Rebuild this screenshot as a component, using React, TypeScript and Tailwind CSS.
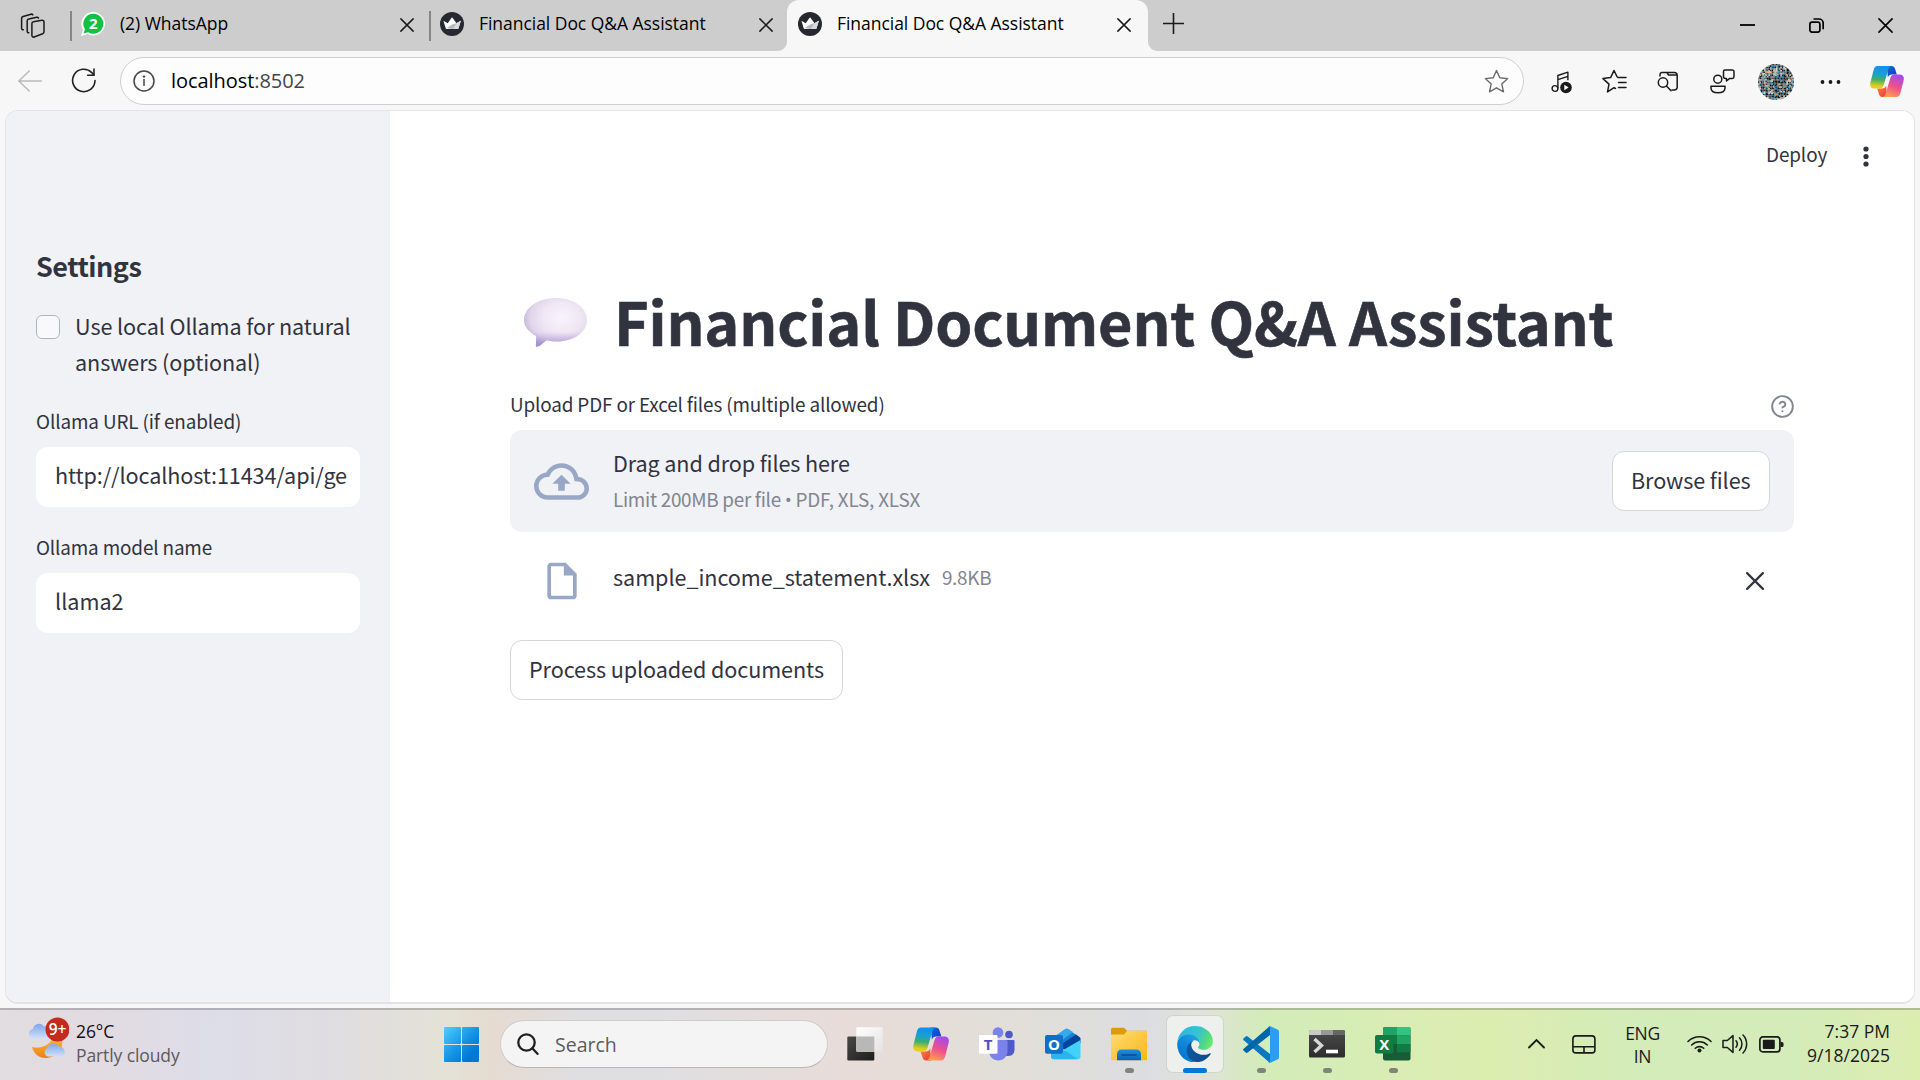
import React from "react";

const UI = "font-['Open_Sans','Noto_Sans',sans-serif]";
const APP = "font-['Noto_Sans_CJK_SC','Noto_Sans',sans-serif]";

function T({ className = "", children }: { className?: string; children: React.ReactNode }) {
  return <span className={`block whitespace-nowrap ${className}`}>{children}</span>;
}

/* ---------- browser icons ---------- */

function Cross({ size, sw, color = "#1a1a1a" }: { size: number; sw: number; color?: string }) {
  return (
    <svg width={size} height={size} viewBox="0 0 16 16" fill="none" stroke={color} strokeWidth={sw} strokeLinecap="round">
      <path d="M1 1l14 14M15 1L1 15" />
    </svg>
  );
}

function CrownIcon() {
  return (
    <svg width="24" height="24" viewBox="0 0 24 24">
      <circle cx="12" cy="12" r="12" fill="#262730" />
      <path d="M3.400 8.800l4.300 2.400L11.600 5.800a.6.6 0 01.9 0l4 5.400 4.300-2.400-2.300 7.400a1 1 0 01-1 .7H6.700a1 1 0 01-1-.7z" fill="#fff" />
      <path d="M12 12.500l4.500-1.300 4.300-2.400-2.300 7.400a1 1 0 01-1 .7H12l-5.300-1z" fill="#b9bac0" />
      <path d="M20.800 8.800l-4.300 2.400L13 16.900h4.500a1 1 0 001-.7z" fill="#d9dadd" />
    </svg>
  );
}

function WhatsAppIcon() {
  return (
    <svg width="24" height="24" viewBox="0 0 24 24">
      <path d="M12.300 0a11.700 11.700 0 11-5.600 22L0 24l1.900-6.600A11.700 11.700 0 0112.300 0z" fill="#fff" />
      <path d="M12.300 1.800a10 10 0 11-5.200 18.500l-4.500 1.200 1.300-4.300A10 10 0 0112.300 1.800z" fill="#12c143" />
      <text x="12.300" y="17.200" textAnchor="middle" fontSize="15" fontWeight="700" fill="#fff" fontFamily="Open Sans">2</text>
    </svg>
  );
}

function WorkspacesIcon() {
  return (
    <svg width="25" height="25" viewBox="0 0 25 25" fill="none" stroke="#1a1a1a" strokeWidth="1.500" strokeLinejoin="round" strokeLinecap="round">
      <path d="M13.500 8.800l8.300-1.600a1.800 1.800 0 012.200 1.800v9.800a2 2 0 01-1.300 1.900l-8.600 3.300a1.600 1.600 0 01-2.200-1.500V10.600a1.900 1.900 0 011.600-1.800z" />
      <path d="M8.800 19.800a1.500 1.500 0 01-1.600-1.500V7.800A2 2 0 018.800 6l7.900-1.800a1.600 1.600 0 011.800.9" />
      <path d="M3.300 16.800A1.500 1.500 0 011.600 15.300V5.200a2 2 0 011.500-1.800L11 1.200a1.600 1.600 0 011.800.7" />
    </svg>
  );
}

function BackIcon() {
  return (
    <svg width="24" height="24" viewBox="0 0 24 24" fill="none" stroke="#b9b9b9" strokeWidth="1.500" strokeLinecap="round" strokeLinejoin="round">
      <path d="M23.500 12H1M11.200 2L.8 12l10.400 10" />
    </svg>
  );
}

function ReloadIcon() {
  return (
    <svg width="25" height="25" viewBox="0 0 25 25" fill="none" stroke="#222" strokeWidth="1.600" strokeLinecap="round" strokeLinejoin="round">
      <path d="M24 12.500a11.200 11.200 0 11-3.200-7.900L22.700 7" />
      <path d="M23 1v6.300h-6.300" />
    </svg>
  );
}

function InfoIcon() {
  return (
    <svg width="22" height="22" viewBox="0 0 22 22" fill="none" stroke="#444" strokeWidth="1.500">
      <circle cx="11" cy="11" r="10" />
      <path d="M11 9.500v6" strokeLinecap="round" />
      <circle cx="11" cy="6.600" r="1.200" fill="#444" stroke="none" />
    </svg>
  );
}

function StarIcon() {
  return (
    <svg width="25" height="25" viewBox="0 0 25 25" fill="none" stroke="#6b6b6b" strokeWidth="1.400" strokeLinejoin="round">
      <path d="M12.500 1.500l3.300 7.200 7.900.9-5.900 5.300 1.700 7.900-7-4-7 4 1.700-7.900L1.300 9.600l7.900-.9z" />
    </svg>
  );
}

function MusicIcon() {
  return (
    <svg width="22" height="24" viewBox="0 0 22 24" fill="none" stroke="#1a1a1a" strokeWidth="1.400" strokeLinejoin="round">
      <circle cx="4" cy="18.500" r="2.900" />
      <path d="M6.900 18.500V5.500l10-3.300v8M6.900 9.600l10-3.300" />
      <circle cx="15" cy="17.500" r="5.800" fill="#1a1a1a" stroke="none" />
      <path d="M13.300 14.700v5.600l4.300-2.800z" fill="#fff" stroke="none" />
    </svg>
  );
}

function FavoritesIcon() {
  return (
    <svg width="25" height="25" viewBox="0 0 25 25" fill="none" stroke="#1a1a1a" strokeWidth="1.500" strokeLinejoin="round" strokeLinecap="round">
      <path d="M16 8.500h8M16.500 13.500h7.500M16.500 18.500h7.500" />
      <path d="M13.500 19.500l-1.500-.8-6.500 4.200 1.500-7.800L1 9.600l7.600-1L12 1.500l3.200 6.500" />
    </svg>
  );
}

function HistorySearchIcon() {
  return (
    <svg width="22" height="22" viewBox="0 0 22 22" fill="none" stroke="#1a1a1a" strokeWidth="1.500" strokeLinejoin="round" strokeLinecap="round">
      <path d="M3 5V3.500a2 2 0 012-2h5l1.500 2.500h8.500M10 1.500h7.500a2.700 2.700 0 012.700 2.700v12a2.700 2.700 0 01-2.700 2.700H15" />
      <circle cx="6" cy="11.500" r="4.700" />
      <path d="M9.500 15l4.500 4.700" />
    </svg>
  );
}

function FeedbackIcon() {
  return (
    <svg width="25" height="25" viewBox="0 0 25 25" fill="none" stroke="#1a1a1a" strokeWidth="1.500" strokeLinejoin="round">
      <circle cx="7.800" cy="10.200" r="4" />
      <path d="M1 17.200h14v1.800c0 3-3 4.800-7 4.800s-7-1.800-7-4.800z" />
      <path d="M14.500 1h7.800a1.700 1.700 0 011.700 1.700v5a1.700 1.700 0 01-1.700 1.700h-2.600L16.500 12V9.400h-1a2 2 0 01-2-2V2.600A1.600 1.600 0 0114.500 1z" />
    </svg>
  );
}

const mosaicColors = ["#10161d", "#1d4f6b", "#2f7fa0", "#5fb6c9", "#8d6a4f", "#c9a98a", "#3a2a26", "#0b2030", "#d8cfc4", "#46586a", "#17191c", "#2a6680", "#b08a6a"];

function Avatar() {
  const cells: React.ReactNode[] = [];
  let seed = 11;
  for (let y = 0; y < 24; y++) {
    for (let x = 0; x < 24; x++) {
      seed = (seed * 1103515245 + 12345) % 2147483648;
      cells.push(<rect key={`${x}-${y}`} x={x * 1.5} y={y * 1.5} width="1.500" height="1.500" fill={mosaicColors[Math.floor((seed / 2147483648) * mosaicColors.length)]} />);
    }
  }
  return (
    <svg width="36" height="36" viewBox="0 0 36 36" className="rounded-full">
      {cells}
      <path d="M18 30C7 23 5 17 6 13c1.500-5 8-6 12-1 4-5 10.500-4 12 1 1 4-1 10-12 17z" fill="#0c1a24" fillOpacity=".15" stroke="#d9c99f" strokeOpacity=".7" strokeWidth="1" />
    </svg>
  );
}

function Copilot({ id, w, h }: { id: string; w: number; h: number }) {
  return (
    <svg width={w} height={h} viewBox="0 0 34 31">
      <defs>
        <linearGradient id={`${id}a`} x1=".4" y1="0" x2=".3" y2="1">
          <stop offset="0" stopColor="#0f8ff0" />
          <stop offset=".35" stopColor="#1b9fd0" />
          <stop offset=".6" stopColor="#3fae6a" />
          <stop offset=".9" stopColor="#e8cf16" />
        </linearGradient>
        <linearGradient id={`${id}b`} x1=".7" y1="0" x2=".3" y2="1">
          <stop offset="0" stopColor="#a24bf0" />
          <stop offset=".5" stopColor="#ee4f8d" />
          <stop offset="1" stopColor="#ffa14f" />
        </linearGradient>
        <linearGradient id={`${id}c`} x1="0" y1="0" x2="1" y2="1">
          <stop offset="0" stopColor="#0a6ad8" />
          <stop offset="1" stopColor="#1637c4" />
        </linearGradient>
        <linearGradient id={`${id}d`} x1="0" y1="0" x2="1" y2="1">
          <stop offset="0" stopColor="#ff8a3c" />
          <stop offset="1" stopColor="#e8343c" />
        </linearGradient>
      </defs>
      <path d="M17 0h4.500c2 0 3 1 3.600 3l1.700 5.500h-5c-2 0-3.300 1-4 3z" fill={`url(#${id}c)`} />
      <path d="M17 31h-4.500c-2 0-3-1-3.600-3l-1.700-5.500h5c2 0 3.300-1 4-3z" fill={`url(#${id}d)`} />
      <path d="M7.500 0H22c-2 0-3 1.300-3.700 3.500l-4.600 15.500c-.8 2.500-2 3.500-4.500 3.500H4.500C.5 22.500-.4 19.500.4 16.500L3.600 4C4.300 1.300 5.500 0 7.500 0z" fill={`url(#${id}a)`} />
      <path d="M26.500 31H12c2 0 3-1.300 3.700-3.500l4.600-15.500c.8-2.500 2-3.500 4.500-3.500h4.700c4 0 4.900 3 4.100 6L30.400 27c-.7 2.700-1.900 4-3.900 4z" fill={`url(#${id}b)`} />
    </svg>
  );
}

/* ---------- browser chrome ---------- */

function TabBar() {
  return (
    <div className={`flex h-[51px] w-full bg-[#cdcdcd] text-[17.500px] tracking-[-0.04px] text-black ${UI}`}>
      <div className="flex w-[70px] items-center pl-[20px]">
        <WorkspacesIcon />
      </div>
      <div className="flex h-[51px] w-[359px] items-start">
        <div className="mt-[11px] h-[30px] w-[2px] bg-[#868686]" />
        <div className="mt-[12px] ml-[9px]"><WhatsAppIcon /></div>
        <T className="mt-[11px] ml-[15px] w-[280px] leading-[24px]">(2) WhatsApp</T>
        <div className="mt-[18px]"><Cross size={14} sw={1.7} /></div>
      </div>
      <div className="flex h-[51px] w-[358px] items-start">
        <div className="mt-[11px] h-[30px] w-[2px] bg-[#868686]" />
        <div className="mt-[12px] ml-[9px]"><CrownIcon /></div>
        <T className="mt-[11px] ml-[15px] w-[280px] leading-[24px]">Financial Doc Q&amp;A Assistant</T>
        <div className="mt-[18px]"><Cross size={14} sw={1.7} /></div>
      </div>
      <div className="relative flex h-[51px] w-[361px] items-start rounded-t-[12px] bg-[#f7f7f7]">
        <svg className="absolute bottom-0 -left-[9px]" width="9" height="9" viewBox="0 0 9 9"><path d="M9 0v9H0a9 9 0 009-9z" fill="#f7f7f7" /></svg>
        <svg className="absolute -right-[9px] bottom-0" width="9" height="9" viewBox="0 0 9 9"><path d="M0 0v9h9a9 9 0 01-9-9z" fill="#f7f7f7" /></svg>
        <div className="mt-[12px] ml-[11px]"><CrownIcon /></div>
        <T className="mt-[11px] ml-[15px] w-[280px] leading-[24px]">Financial Doc Q&amp;A Assistant</T>
        <div className="mt-[18px]"><Cross size={14} sw={1.7} /></div>
      </div>
      <svg className="mt-[13px] ml-[15px]" width="21" height="21" viewBox="0 0 21 21" stroke="#1a1a1a" strokeWidth="1.600"><path d="M10.500 0v21M0 10.500h21" /></svg>
      <div className="ml-auto flex gap-[54px] pt-[18px] pr-[27px]">
        <svg width="15" height="15" viewBox="0 0 15 15"><path d="M0 7h15" stroke="#000" strokeWidth="1.800" /></svg>
        <svg width="15" height="15" viewBox="0 0 15 15" fill="none" stroke="#000" strokeWidth="1.700">
          <rect x=".9" y="4.200" width="10" height="10" rx="2.200" />
          <path d="M4.500 1H10a4.200 4.200 0 014.200 4.200v6" />
        </svg>
        <Cross size={15} sw={1.7} color="#000" />
      </div>
    </div>
  );
}

function Toolbar() {
  return (
    <div className={`flex h-[59px] w-full items-start bg-[#f7f7f7] ${UI}`}>
      <div className="mt-[18px] ml-[18px]"><BackIcon /></div>
      <div className="mt-[17px] ml-[29px]"><ReloadIcon /></div>
      <div className="mt-[6px] ml-[24px] flex h-[48px] w-[1404px] items-center rounded-full border-[1.500px] border-[#cfcfcf] bg-[#fdfdfd] pr-[14px] pl-[12px]">
        <InfoIcon />
        <T className="ml-[16px] text-[20px] leading-[28px] tracking-[-0.06px] text-black">localhost<span className="text-[#444]">:8502</span></T>
        <div className="ml-auto"><StarIcon /></div>
      </div>
      <div className="mt-[18px] ml-[27px] flex h-[25px] items-center">
        <MusicIcon />
        <div className="ml-[29px]"><FavoritesIcon /></div>
        <div className="ml-[30px]"><HistorySearchIcon /></div>
        <div className="ml-[31px]"><FeedbackIcon /></div>
        <div className="ml-[23px]"><Avatar /></div>
        <svg className="ml-[26px]" width="22" height="6" viewBox="0 0 22 6" fill="#1a1a1a"><circle cx="2.500" cy="3" r="1.900" /><circle cx="10.500" cy="3" r="1.900" /><circle cx="18.500" cy="3" r="1.900" /></svg>
        <div className="ml-[28px]"><Copilot id="cpt" w={34} h={31} /></div>
      </div>
    </div>
  );
}

/* ---------- Streamlit page ---------- */

function Sidebar() {
  return (
    <aside className="flex h-full w-[384px] flex-col bg-[#f0f2f6] pt-[137px] pl-[30px] text-[#31333f]">
      <T className="text-[27px] leading-[36px] font-bold tracking-[-0.500px]">Settings</T>
      <div className="mt-[24px] flex">
        <div className="mt-[7px] h-[24px] w-[24px] rounded-[6px] border-[1.500px] border-[#b3b4ba] bg-[#f9f9fb]" />
        <div className="ml-[15px] text-[21.600px] leading-[36px] tracking-[-0.1px]">
          <T>Use local Ollama for natural</T>
          <T>answers (optional)</T>
        </div>
      </div>
      <T className="mt-[26px] text-[18.900px] leading-[30px] tracking-[-0.120px]">Ollama URL (if enabled)</T>
      <div className="mt-[11px] flex h-[60px] w-[324px] items-center overflow-hidden rounded-[12px] bg-white pb-[4px] pl-[19px] text-[21.600px]">
        <T className="leading-[36px] tracking-[-0.11px]">http://localhost:11434/api/ge</T>
      </div>
      <T className="mt-[25px] text-[18.900px] leading-[30px] tracking-[-0.150px]">Ollama model name</T>
      <div className="mt-[11px] flex h-[60px] w-[324px] items-center rounded-[12px] bg-white pb-[4px] pl-[19px] text-[21.600px]">
        <T className="leading-[36px]">llama2</T>
      </div>
    </aside>
  );
}

function SpeechBubble() {
  return (
    <svg width="63" height="49" viewBox="0 0 63 49">
      <defs>
        <radialGradient id="bub" cx=".6" cy=".4" r=".65">
          <stop offset="0" stopColor="#f8f4fb" />
          <stop offset=".45" stopColor="#f0e8f5" />
          <stop offset=".78" stopColor="#e0d5ea" />
          <stop offset="1" stopColor="#bcadd4" />
        </radialGradient>
        <linearGradient id="tail" x1="0" y1="0" x2="0" y2="1">
          <stop offset=".7" stopColor="#a58bd0" stopOpacity="0" />
          <stop offset="1" stopColor="#9a80cc" stopOpacity=".8" />
        </linearGradient>
      </defs>
      <path d="M32 0C50 0 63 10 63 22S50 43.500 33 43.500c-4 0-7-.3-10-1.200C20 44 17 48 12.800 48.800c-.9 0-1-.5-.9-1.300L12.200 38C5 34 0 29 0 22 0 10 14 0 32 0z" fill="url(#bub)" />
      <path d="M32 0C50 0 63 10 63 22S50 43.500 33 43.500c-4 0-7-.3-10-1.200C20 44 17 48 12.800 48.800c-.9 0-1-.5-.9-1.300L12.200 38C5 34 0 29 0 22 0 10 14 0 32 0z" fill="url(#tail)" />
    </svg>
  );
}

function Main() {
  return (
    <main className="flex h-full min-w-0 flex-1 flex-col bg-white text-[#31333f]">
      <div className="flex h-[90px] items-center justify-end pr-[45px]">
        <T className="-mt-[4px] w-[60px] text-[18.900px] leading-[30px] tracking-[-0.1px]">Deploy</T>
        <svg className="ml-[37px]" width="6" height="21" viewBox="0 0 6 21" fill="#31333f"><circle cx="3" cy="3" r="2.600" /><circle cx="3" cy="10.500" r="2.600" /><circle cx="3" cy="18" r="2.600" /></svg>
      </div>
      <div className="flex w-[1404px] flex-col pt-[81px] pl-[120px]">
        <div className="flex h-[80px] items-center pl-[14px]">
          <SpeechBubble />
          <T className="-mt-[4px] ml-[27px] text-[59.400px] leading-[80px] font-bold tracking-[-0.170px] [-webkit-text-stroke:0.6px_#31333f]">Financial Document Q&amp;A Assistant</T>
        </div>
        <div className="mt-[29px] flex h-[30px] items-center justify-between">
          <T className="-mt-[4px] text-[18.900px] leading-[30px] tracking-[-0.150px]">Upload PDF or Excel files (multiple allowed)</T>
          <svg width="23" height="23" viewBox="0 0 24 24" fill="none" stroke="#83858f" strokeWidth="2" strokeLinecap="round" strokeLinejoin="round">
            <circle cx="12" cy="12" r="10.800" />
            <path d="M9.090 9a3 3 0 015.830 1c0 2-3 3-3 3M12 17h.010" />
          </svg>
        </div>
        <div className="mt-[9px] flex h-[102px] items-center rounded-[12px] bg-[#f0f2f6] pr-[24px] pl-[24px]">
          <svg width="55" height="55" viewBox="0 0 24 24" fill="#98a7c6"><path d="M19.350 10.040A7.490 7.490 0 0012 4C9.110 4 6.600 5.640 5.350 8.040A5.994 5.994 0 000 14c0 3.310 2.690 6 6 6h13c2.760 0 5-2.240 5-5 0-2.640-2.050-4.780-4.650-4.960zM19 18H6c-2.210 0-4-1.790-4-4 0-2.050 1.530-3.760 3.560-3.970l1.070-.11.5-.95A5.469 5.469 0 0112 6c2.620 0 4.880 1.860 5.390 4.430l.3 1.500 1.530.11A2.980 2.980 0 0122 15c0 1.650-1.350 3-3 3zM8 13h2.550v3h2.900v-3H16l-4-4z" /></svg>
          <div className="ml-[24px] flex flex-col">
            <T className="text-[21.600px] leading-[36px] tracking-[-0.11px]">Drag and drop files here</T>
            <T className="text-[18.900px] leading-[36px] tracking-[-0.3px] text-[#83858f]">
              Limit 200MB per file <span className="font-['Open_Sans']">•</span> <span className="tracking-[-0.2px]">PDF, XLS, XLSX</span>
            </T>
          </div>
          <div className="ml-auto flex h-[60px] w-[158px] items-center rounded-[12px] border-[1.500px] border-[#d6d6d9] bg-white pb-[2px] pl-[18px]">
            <T className="text-[21.600px] leading-[36px] tracking-[-0.1px]">Browse files</T>
          </div>
        </div>
        <div className="mt-[25px] flex h-[48px] items-center pr-[30px] pl-[30px]">
          <svg width="44" height="44" viewBox="0 0 24 24" fill="#98a7c6"><path d="M14 2H6c-1.100 0-1.990.9-1.990 2L4 20c0 1.100.89 2 1.990 2H18c1.100 0 2-.9 2-2V8l-6-6zM6 20V4h7v5h5v11H6z" /></svg>
          <T className="-mt-[9px] ml-[29px] text-[21.600px] leading-[36px] tracking-[-0.06px]">sample_income_statement.xlsx</T>
          <T className="-mt-[8px] ml-[12px] text-[18.900px] leading-[36px] tracking-[-0.3px] text-[#83858f]">9.8KB</T>
          <div className="ml-auto"><Cross size={18} sw={1.9} color="#31333f" /></div>
        </div>
        <div className="mt-[35px] flex h-[60px] w-[333px] items-center rounded-[12px] border-[1.500px] border-[#d6d6d9] bg-white pb-[2px] pl-[18px]">
          <T className="text-[21.600px] leading-[36px] tracking-[-0.09px]">Process uploaded documents</T>
        </div>
      </div>
    </main>
  );
}

/* ---------- taskbar ---------- */

function WeatherIcon() {
  return (
    <svg width="42" height="42" viewBox="0 0 42 42">
      <defs>
        <linearGradient id="cl" x1="0" y1="0" x2="0" y2="1"><stop offset="0" stopColor="#7fa6e8" /><stop offset="1" stopColor="#cfe0fa" /></linearGradient>
        <linearGradient id="mo" x1="0" y1="0" x2="0" y2="1"><stop offset="0" stopColor="#f7b733" /><stop offset="1" stopColor="#f07f1a" /></linearGradient>
      </defs>
      <path d="M6 21.500a4.800 4.800 0 010-9.500 6 6 0 0111-2.500 5 5 0 017 4v8z" fill="url(#cl)" />
      <path d="M5 30c8 2 16-1 20-8h10c2 10-5 19-17 19-6 0-11-4-13-11z" fill="url(#mo)" />
      <path d="M21 39.500a4.500 4.500 0 01-.5-8.500 6.500 6.500 0 0112-1 4.900 4.900 0 012 9.500z" fill="url(#cl)" />
      <circle cx="30.500" cy="12.500" r="12" fill="#c42b1c" />
      <text x="30.500" y="17.500" textAnchor="middle" fontSize="15.500" fontWeight="600" fill="#fff" fontFamily="Open Sans">9+</text>
    </svg>
  );
}

function WindowsIcon() {
  return (
    <svg width="35" height="35" viewBox="0 0 35 35">
      <defs><linearGradient id="win" gradientUnits="userSpaceOnUse" x1="0" y1="0" x2="35" y2="35"><stop offset="0" stopColor="#4cd0fb" /><stop offset=".5" stopColor="#1793e4" /><stop offset=".8" stopColor="#0078d4" /></linearGradient></defs>
      <g fill="url(#win)"><rect width="17" height="17" rx="1" /><rect x="18" width="17" height="17" rx="1" /><rect y="18" width="17" height="17" rx="1" /><rect x="18" y="18" width="17" height="17" rx="1" /></g>
    </svg>
  );
}

function TaskViewIcon() {
  return (
    <svg width="36" height="36" viewBox="0 0 36 36">
      <defs>
        <linearGradient id="tv" x1="0" y1="0" x2="1" y2="1"><stop offset="0" stopColor="#4a4845" /><stop offset="1" stopColor="#1c1c1c" /></linearGradient>
        <linearGradient id="tw" x1="0" y1="0" x2="1" y2="1"><stop offset="0" stopColor="#ffffff" /><stop offset="1" stopColor="#e4e2e2" /></linearGradient>
      </defs>
      <rect x=".3" y="10.500" width="27" height="24" rx="1.200" fill="url(#tv)" />
      <rect x="9.300" y="1.300" width="26.400" height="24.400" rx="1" fill="url(#tw)" />
      <path d="M9.300 10.500h18v14.200a1 1 0 01-1 1h-16a1 1 0 01-1-1z" fill="#b9b8b8" />
    </svg>
  );
}

function TeamsIcon() {
  return (
    <svg width="36" height="36" viewBox="0 0 36 36">
      <circle cx="19" cy="6.500" r="5.300" fill="#7b83eb" />
      <circle cx="30" cy="8.500" r="3.800" fill="#5059c9" />
      <path d="M26 14h8.500a1 1 0 011 1v8c0 4-2 7-6 7h-4z" fill="#5059c9" />
      <path d="M12 14h15a1.500 1.500 0 011.500 1.500V25c0 5.500-4 9.500-9.200 9.500S10 30.500 10 25z" fill="#7b83eb" />
      <rect x="0" y="9" width="18.500" height="18.800" rx="1" fill="#fff" />
      <text x="9.200" y="24" textAnchor="middle" fontSize="15" fontWeight="700" fill="#4b53bc" fontFamily="Open Sans">T</text>
    </svg>
  );
}

function OutlookIcon() {
  return (
    <svg width="36" height="36" viewBox="0 0 36 36">
      <path d="M8 12L20 3.200a2.500 2.500 0 013 0l12 8.300V28H6z" fill="#1484d8" />
      <path d="M10 10l10.500-7a2.500 2.500 0 012.600 0L28 6 12 18z" fill="#37a9ea" />
      <path d="M18 17l13-8.500 4.500 3.500v5L18 26z" fill="#03449a" />
      <path d="M6 25l14-2 15.500-9v16.500a2.800 2.800 0 01-2.800 2.800H9a3 3 0 01-3-3z" fill="#40d2f8" />
      <path d="M6 25h15l12 8.300H9a3 3 0 01-3-3z" fill="#2bb5ee" />
      <rect x="0" y="9" width="18" height="18.800" rx="2" fill="#0f6fc9" />
      <text x="9" y="23.800" textAnchor="middle" fontSize="15" fontWeight="700" fill="#fff" fontFamily="Open Sans">O</text>
    </svg>
  );
}

function FolderIcon() {
  return (
    <svg width="36" height="36" viewBox="0 0 36 36">
      <defs>
        <linearGradient id="fo" x1="0" y1="0" x2="1" y2="1"><stop offset="0" stopColor="#ffdc74" /><stop offset="1" stopColor="#fbb618" /></linearGradient>
        <linearGradient id="fb" x1="0" y1="0" x2="0" y2="1"><stop offset="0" stopColor="#1b8fe0" /><stop offset="1" stopColor="#0a62b4" /></linearGradient>
      </defs>
      <path d="M0 3.500A1.700 1.700 0 011.700 1.800H13l3 3h19.500V12H0z" fill="#dd9a0a" />
      <path d="M0 8.500h13l3-3.500h18.500a1.500 1.500 0 011.500 1.500V34.300H0z" fill="url(#fo)" />
      <path d="M6 34.300V28a4.500 4.500 0 014.500-4.500h15A4.500 4.500 0 0130 28v6.300z" fill="url(#fb)" />
      <path d="M11 29h14" stroke="#0a4a92" strokeWidth="1.600" strokeLinecap="round" />
    </svg>
  );
}

function EdgeIcon() {
  return (
    <svg width="36" height="36" viewBox="0 0 256 258">
      <defs>
        <linearGradient id="e1" x1="0" y1=".6" x2="1" y2=".8"><stop offset="0" stopColor="#0c59a4" /><stop offset="1" stopColor="#114a8b" /></linearGradient>
        <linearGradient id="e2" x1=".8" y1=".2" x2=".3" y2="1"><stop offset="0" stopColor="#1b9de2" /><stop offset=".4" stopColor="#1087d8" /><stop offset="1" stopColor="#0075d0" /></linearGradient>
        <linearGradient id="e3" x1="0" y1=".3" x2="1" y2=".6"><stop offset="0" stopColor="#2fb6e4" /><stop offset=".5" stopColor="#35c1d6" /><stop offset=".8" stopColor="#4fd48a" /><stop offset="1" stopColor="#66eb6e" /></linearGradient>
      </defs>
      <path d="M235.680 195.510a93.730 93.730 0 01-10.540 4.710 101.870 101.870 0 01-35.900 6.460c-47.320 0-88.540-32.550-88.540-74.320A31.480 31.480 0 01117.130 105c-42.800 1.800-53.800 46.400-53.800 72.530 0 73.880 68.090 81.370 82.760 81.370 7.910 0 19.840-2.300 27-4.560l1.310-.44a128.340 128.340 0 0066.600-52.800 4 4 0 00-5.320-5.590z" fill="url(#e1)" />
      <path d="M105.730 246.990a79.200 79.200 0 01-22.740-21.340 80.720 80.720 0 0129.530-120c3.140-1.440 8.480-4.210 15.630-4.100a32.350 32.350 0 0125.690 13 31.880 31.880 0 016.360 18.660c0-.21 24.460-79.600-80-79.600-43.900 0-80 41.660-80 78.210a130.150 130.150 0 0012.110 56 128 128 0 00156.380 67.110 75.550 75.550 0 01-62.780-8z" fill="url(#e2)" />
      <path d="M152.330 148.860c-.81 1.050-3.300 2.500-3.300 5.660 0 2.610 1.700 5.120 4.720 7.230 14.380 10 41.490 8.680 41.560 8.680A59.560 59.560 0 00225.590 162 61.380 61.380 0 00256 109.080c.26-22.410-8-37.310-11.340-43.910C223.460 23.760 177.720 0 128 0A128 128 0 000 126.200c.48-36.540 36.800-66.050 80-66.050 3.500 0 23.460.34 42 10.070 16.340 8.580 24.900 18.940 30.850 29.210 6.180 10.670 7.280 24.150 7.280 29.520s-2.740 13.330-7.800 19.910z" fill="url(#e3)" />
    </svg>
  );
}

function VSCodeIcon() {
  return (
    <svg width="36" height="37" viewBox="0 0 36 37">
      <path d="M.7 12.300l2-1.900a1.500 1.500 0 012 0L27 28v9L.7 14.300a1.300 1.300 0 010-2z" fill="#0a77c2" />
      <path d="M.7 24.700l2 1.900a1.500 1.500 0 002 0L27 9V0L.7 22.700a1.300 1.300 0 000 2z" fill="#0065a9" />
      <path d="M25 36.500c1 .7 2 .6 3 .1l7-3.400a2 2 0 001-1.800V5.600a2 2 0 00-1-1.800L28 .4a2.400 2.400 0 00-3 .5c1-.6 2 .1 2 1.400v32.400c0 1.300-1 2.200-2 1.800z" fill="#2a9ff0" />
    </svg>
  );
}

function TerminalIcon() {
  return (
    <svg width="36" height="36" viewBox="0 0 36 36">
      <defs><linearGradient id="te" x1="0" y1="0" x2="0" y2="1"><stop offset="0" stopColor="#4c4c4c" /><stop offset="1" stopColor="#2c2c2c" /></linearGradient></defs>
      <rect y="4" width="36" height="27.500" rx="1.500" fill="url(#te)" />
      <path d="M1.500 4H12v5H0V5.500A1.500 1.500 0 011.500 4z" fill="#c9c9c9" />
      <path d="M12 4h12v5H12z" fill="#999" />
      <path d="M24 4h10.500A1.500 1.500 0 0136 5.500V9H24z" fill="#666" />
      <path d="M5.500 13l7 6.500-7 6.500" fill="none" stroke="#d8d8d8" strokeWidth="3.400" />
      <path d="M17 25.500h12" stroke="#fff" strokeWidth="3.600" />
    </svg>
  );
}

function ExcelIcon() {
  return (
    <svg width="36" height="36" viewBox="0 0 36 36">
      <rect x="8" y="1" width="27.500" height="33.500" rx="2" fill="#185c37" />
      <path d="M10 1h12v8.500H8V3a2 2 0 012-2z" fill="#21a366" />
      <path d="M22 1h11.500a2 2 0 012 2v6.500H22z" fill="#33c481" />
      <path d="M8 9.500h14V18H8z" fill="#107c41" />
      <path d="M22 9.500h13.500V18H22z" fill="#21a366" />
      <path d="M22 18h13.500v8.300H22z" fill="#107c41" />
      <rect x="0" y="9" width="18.500" height="18.500" rx="2" fill="#107c41" />
      <text x="9.200" y="23.800" textAnchor="middle" fontSize="15" fontWeight="700" fill="#fff" fontFamily="Open Sans">X</text>
    </svg>
  );
}

function AppSlot({ running, active, children }: { running?: boolean; active?: boolean; children: React.ReactNode }) {
  return (
    <div className="relative flex h-[70px] w-[66px] justify-center pt-[6px]">
      <div className={`flex h-[56px] w-[56px] items-center justify-center rounded-[6px] ${active ? "bg-[#eef0ed] shadow-[0_0_0_1px_rgba(0,0,0,0.06)]" : ""}`}>{children}</div>
      {running && <div className="absolute top-[58px] left-[29px] h-[5px] w-[9px] rounded-full bg-[#818579]" />}
      {active && <div className="absolute top-[58px] left-[21px] h-[5px] w-[24px] rounded-full bg-[#0078d7]" />}
    </div>
  );
}

function Taskbar() {
  return (
    <div className={`flex h-[72px] w-full items-start border-t-2 border-black/20 bg-[linear-gradient(90deg,#e2dde1_0px,#e2dbe1_90px,#dddde8_215px,#e0dde1_330px,#e3e2d6_445px,#e6dbd1_490px,#dfdee0_570px,#dfdfe2_650px,#e8dcd8_860px,#e1dfd8_1020px,#dcdde1_1145px,#dfe3da_1200px,#d3ecb9_1265px,#d9edb4_1400px,#dcedb0_1490px,#d3ecb9_1640px,#d4ecb9_1800px,#dcedb0_1920px)] bg-origin-border ${UI}`}>
      <div className="mt-[7px] ml-[27px]"><WeatherIcon /></div>
      <div className="ml-[7px] w-[368px] pt-[9px] text-[17.500px] leading-[24px] tracking-[-0.1px]">
        <T className="text-[#111]">26°C</T>
        <T className="text-[#5b5a5c]">Partly cloudy</T>
      </div>
      <div className="mt-[17px]"><WindowsIcon /></div>
      <div className="mt-[10px] ml-[21px] flex h-[48px] w-[328px] items-center rounded-full border-[1.500px] border-[#cfcbc9] border-b-[#b9b6b5] bg-[#f5f4f4] pl-[16px]">
        <svg width="22" height="22" viewBox="0 0 22 22" fill="none" stroke="#202020" strokeWidth="2.300" strokeLinecap="round"><circle cx="9.500" cy="9.500" r="8.200" /><path d="M15.300 15.300l5.200 5.500" /></svg>
        <T className="mt-[1px] ml-[16px] text-[19.500px] leading-[28px] text-[#5c5c5c]">Search</T>
      </div>
      <div className="ml-[4px] flex">
        <AppSlot><TaskViewIcon /></AppSlot>
        <AppSlot><Copilot id="cpb" w={36} h={34} /></AppSlot>
        <AppSlot><TeamsIcon /></AppSlot>
        <AppSlot><OutlookIcon /></AppSlot>
        <AppSlot running><FolderIcon /></AppSlot>
        <AppSlot active><EdgeIcon /></AppSlot>
        <AppSlot running><VSCodeIcon /></AppSlot>
        <AppSlot running><TerminalIcon /></AppSlot>
        <AppSlot running><ExcelIcon /></AppSlot>
      </div>
      <div className="ml-auto flex pr-[30px] text-[17.500px] text-[#1a1a1a]">
        <svg className="mt-[28px]" width="17" height="11" viewBox="0 0 17 11" fill="none" stroke="#1a1a1a" strokeWidth="1.800" strokeLinecap="round"><path d="M1 9.500l7.500-7.500L16 9.500" /></svg>
        <svg className="mt-[25px] ml-[27px]" width="24" height="19" viewBox="0 0 24 19" fill="none" stroke="#1a1a1a" strokeWidth="1.600"><rect x=".9" y=".9" width="22" height="17" rx="3" /><path d="M1 11.800h22M12 11.800V18" /></svg>
        <div className="ml-[26px] flex w-[41px] flex-col items-center pt-[12px] leading-[23px] tracking-[-0.3px]">
          <T>ENG</T>
          <T>IN</T>
        </div>
        <svg className="mt-[24px] ml-[24px]" width="25" height="19" viewBox="0 0 25 19" fill="none" stroke="#1a1a1a" strokeWidth="1.600" strokeLinecap="round"><path d="M1 7.500a16.300 16.300 0 0123 0M4.700 11a11 11 0 0115.600 0M8.300 14.300a6 6 0 018.400 0" /><circle cx="12.500" cy="16.500" r="2" fill="#1a1a1a" stroke="none" /></svg>
        <svg className="mt-[23px] ml-[10px]" width="26" height="22" viewBox="0 0 26 22" fill="none" stroke="#1a1a1a" strokeWidth="1.500" strokeLinecap="round" strokeLinejoin="round"><path d="M1 7.500h4.300L11 2.600v16.800l-5.700-4.900H1zM14 7.800a5 5 0 010 6.400M17.500 4.800a9 9 0 010 12.400M21 2a13 13 0 010 18" /></svg>
        <svg className="mt-[26px] ml-[11px]" width="25" height="17" viewBox="0 0 25 17" fill="none" stroke="#1a1a1a" strokeWidth="1.700"><rect x=".9" y=".9" width="20" height="15" rx="3" /><rect x="3.800" y="3.800" width="12" height="9.200" rx="1" fill="#1a1a1a" stroke="none" /><path d="M21.500 6h1.500a1.500 1.500 0 011.500 1.500v2A1.500 1.500 0 0123 11h-1.500z" fill="#1a1a1a" stroke="none" /></svg>
        <div className="ml-[22px] flex w-[84px] flex-col items-end pt-[9px] leading-[24px]">
          <T>7:37 PM</T>
          <T>9/18/2025</T>
        </div>
      </div>
    </div>
  );
}

export default function App() {
  return (
    <div className="flex h-[1080px] w-[1920px] flex-col overflow-hidden bg-[#f7f7f7]">
      <TabBar />
      <Toolbar />
      <div className="h-[898px] w-full bg-[#f7f7f7] px-[5px]">
        <div className={`flex h-[894px] w-full overflow-hidden rounded-[13px] border border-b-2 border-[#e3e3e5] bg-white ${APP}`}>
          <Sidebar />
          <Main />
        </div>
      </div>
      <Taskbar />
    </div>
  );
}
